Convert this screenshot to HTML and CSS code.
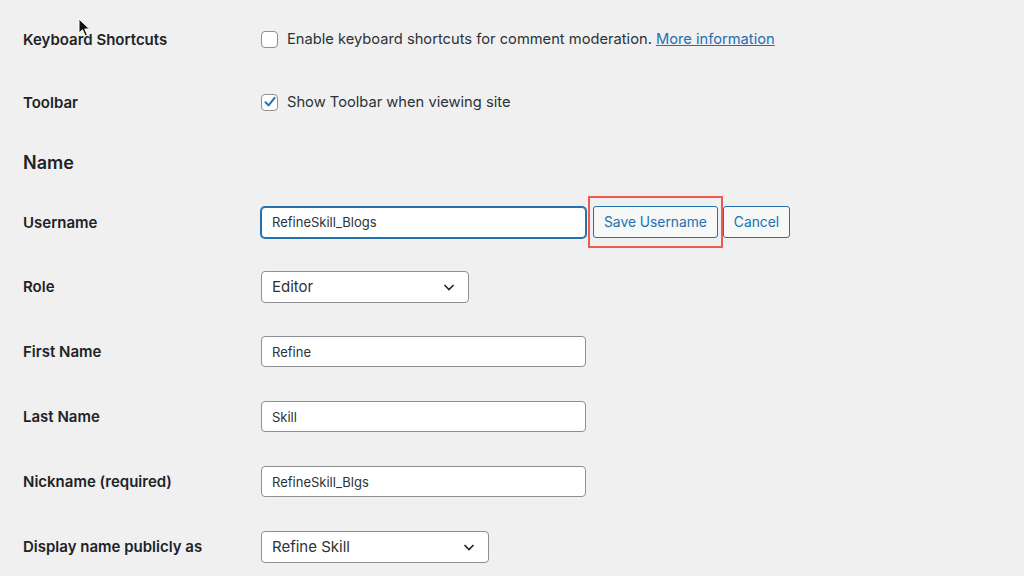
FILE: index.html
```html
<!DOCTYPE html>
<html lang="en">
<head>
    <meta charset="UTF-8">
    <title>Profile</title>
    <link rel="stylesheet" href="styles.css">
</head>
<body>
    <div class="profile">
        <div class="row row-kb">
            <div class="label">Keyboard Shortcuts</div>
            <div class="field">
                <label class="check">
                    <span class="box"></span>
                    Enable keyboard shortcuts for comment moderation. <a href="#">More information</a>
                </label>
            </div>
        </div>

        <div class="row row-toolbar">
            <div class="label">Toolbar</div>
            <div class="field">
                <label class="check">
                    <span class="box checked">
                        <svg width="14" height="14" viewBox="0 0 14 14"><path d="M2.5 7.2 L5.6 10.4 L11.6 2.8" fill="none" stroke="#2271b1" stroke-width="2" stroke-linecap="round" stroke-linejoin="round"/></svg>
                    </span>
                    Show Toolbar when viewing site
                </label>
            </div>
        </div>

        <div class="row row-heading">
            <h2>Name</h2>
        </div>

        <div class="row row-user">
            <div class="label">Username</div>
            <div class="field">
                <input type="text" class="text focus" value="RefineSkill_Blogs">
                <span class="highlight">
                    <button class="btn">Save Username</button>
                </span>
                <button class="btn">Cancel</button>
            </div>
        </div>

        <div class="row">
            <div class="label">Role</div>
            <div class="field">
                <div class="select select-role">
                    Editor
                    <svg width="14" height="14" viewBox="0 0 14 14"><path d="M2.5 5 L7 9.5 L11.5 5" fill="none" stroke="#1d2327" stroke-width="1.6"/></svg>
                </div>
            </div>
        </div>

        <div class="row">
            <div class="label">First Name</div>
            <div class="field"><input type="text" class="text" value="Refine"></div>
        </div>

        <div class="row">
            <div class="label">Last Name</div>
            <div class="field"><input type="text" class="text" value="Skill"></div>
        </div>

        <div class="row">
            <div class="label">Nickname <span class="req">(required)</span></div>
            <div class="field"><input type="text" class="text" value="RefineSkill_Blgs"></div>
        </div>

        <div class="row">
            <div class="label">Display name publicly as</div>
            <div class="field">
                <div class="select select-display">
                    Refine Skill
                    <svg width="14" height="14" viewBox="0 0 14 14"><path d="M2.5 5 L7 9.5 L11.5 5" fill="none" stroke="#1d2327" stroke-width="1.6"/></svg>
                </div>
            </div>
        </div>
    </div>

    <svg class="pointer" width="14" height="20" viewBox="0 0 14 20">
        <path d="M1 1 L1 15 L4.5 11.8 L7.2 18 L9.4 17 L6.8 11 L11.5 11 Z" fill="#111" stroke="#fff" stroke-width="1"/>
    </svg>
</body>
</html>
```

FILE: styles.css
```css
body {
    margin: 0;
    background-color: #f0f0f1;
    color: #1d2327;
    font-family: Inter, "Liberation Sans", sans-serif;
    font-size: 15px;
    overflow: hidden;
}

.profile {
    padding: 8px 0 0 23px;
}

.row {
    display: flex;
    align-items: center;
    height: 65px;
}

.row-kb {
    height: 62px;
}

.row-toolbar {
    height: 64px;
}

.row-heading {
    height: 56px;
}

.row-user {
    height: 64px;
}

.label {
    width: 238px;
    flex-shrink: 0;
    font-weight: 600;
    font-size: 15px;
}

.req {
    font-weight: 600;
}

h2 {
    margin: 0;
    font-size: 18px;
    font-weight: 600;
}

.field {
    display: flex;
    align-items: center;
}

.check {
    display: flex;
    align-items: center;
    gap: 9px;
    color: #2c3338;
    font-size: 14.7px;
}

.check a {
    color: #2271b1;
    text-decoration: underline;
    margin-left: -5px;
}

.box {
    width: 15px;
    height: 15px;
    border: 1px solid #8c8f94;
    border-radius: 4px;
    background-color: #fff;
    display: flex;
    align-items: center;
    justify-content: center;
}

.text {
    box-sizing: border-box;
    width: 325px;
    height: 31px;
    padding: 0 10px;
    border: 1px solid #8c8f94;
    border-radius: 4px;
    background-color: #fff;
    font-family: Inter, "Liberation Sans", sans-serif;
    font-size: 13px;
    color: #2c3338;
    margin: 0;
}

.text.focus {
    border-color: #2271b1;
    box-shadow: 0 0 0 1px #2271b1;
}

.highlight {
    display: inline-flex;
    padding: 8px 3px;
    margin: 0 0 0 2px;
    border: 2px solid #ec5b4f;
}

.btn {
    box-sizing: border-box;
    height: 32px;
    padding: 0 10px;
    border: 1px solid #2271b1;
    border-radius: 3px;
    background-color: #f6f7f7;
    color: #2271b1;
    font-family: Inter, "Liberation Sans", sans-serif;
    font-size: 13.8px;
}

.select {
    box-sizing: border-box;
    height: 32px;
    padding: 0 12px 0 10px;
    border: 1px solid #8c8f94;
    border-radius: 4px;
    background-color: #fff;
    display: flex;
    align-items: center;
    justify-content: space-between;
    font-size: 15px;
    color: #2c3338;
}

.select-role {
    width: 208px;
}

.select-display {
    width: 228px;
}

.pointer {
    position: absolute;
    left: 78px;
    top: 18px;
}
```
